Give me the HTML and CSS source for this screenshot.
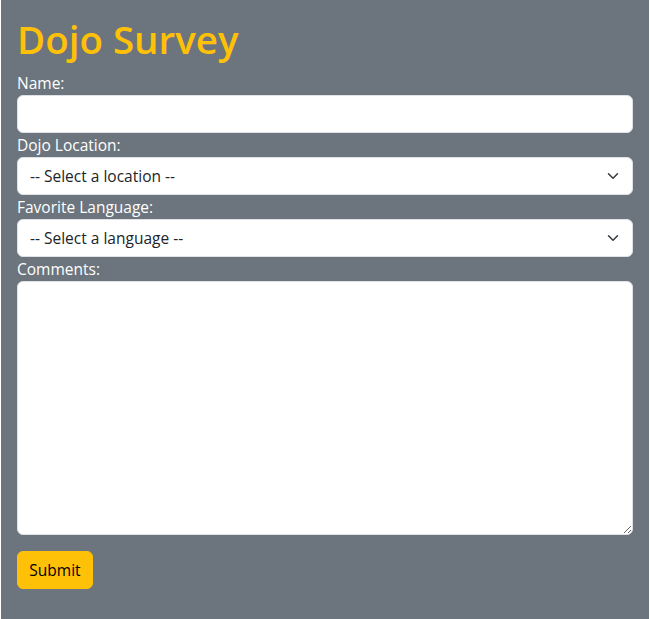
FILE: index.html
```html
<!DOCTYPE html>
<html lang="en">
<head>
<meta charset="utf-8">
<title>Dojo Survey</title>
<link rel="stylesheet" href="styles.css">
</head>
<body>
<div class="page">
  <h1 class="title">Dojo Survey</h1>
  <form class="survey">
    <label class="label" for="name">Name:</label>
    <input class="control" id="name" type="text">
    <label class="label" for="loc">Dojo Location:</label>
    <div class="select-wrap">
      <select class="control select" id="loc">
        <option>-- Select a location --</option>
      </select>
      <svg class="chevron" width="16" height="12" viewBox="0 0 16 16"><path d="M2 5l6 6 6-6" fill="none" stroke="#343a40" stroke-width="2" stroke-linecap="round" stroke-linejoin="round"/></svg>
    </div>
    <label class="label" for="lang">Favorite Language:</label>
    <div class="select-wrap">
      <select class="control select" id="lang">
        <option>-- Select a language --</option>
      </select>
      <svg class="chevron" width="16" height="12" viewBox="0 0 16 16"><path d="M2 5l6 6 6-6" fill="none" stroke="#343a40" stroke-width="2" stroke-linecap="round" stroke-linejoin="round"/></svg>
    </div>
    <label class="label" for="comments">Comments:</label>
    <textarea class="control textarea" id="comments"></textarea>
    <button class="submit" type="button">Submit</button>
  </form>
</div>
</body>
</html>
```
FILE: styles.css
```css
html, body {
  margin: 0;
  padding: 0;
  background: #fff;
}
.page {
  margin: 0 1px;
  min-height: 619px;
  box-sizing: border-box;
  padding: 16px;
  background: #6c757d;
  font-family: "Open Sans", "Noto Sans", sans-serif;
  font-size: 15.5px;
  color: #fff;
}
.title {
  margin: 0 0 8px;
  font-size: 38.5px;
  line-height: 47px;
  font-weight: 600;
  color: #ffc107;
}
.survey {
  display: flex;
  flex-direction: column;
}
.label {
  display: block;
  line-height: 24px;
  height: 24px;
}
.control {
  display: block;
  width: 100%;
  box-sizing: border-box;
  height: 38px;
  margin: 0;
  padding: 6px 12px;
  font-family: inherit;
  font-size: 15.5px;
  line-height: 24px;
  color: #212529;
  background: #fff;
  border: 1px solid #dee2e6;
  border-radius: 6px;
  outline: none;
}
.select-wrap {
  position: relative;
}
.select {
  appearance: none;
  -webkit-appearance: none;
  padding-right: 36px;
}
.chevron {
  position: absolute;
  right: 12px;
  top: 13px;
  pointer-events: none;
}
.textarea {
  height: 254px;
  resize: vertical;
}
.submit {
  align-self: flex-start;
  margin-top: 16px;
  height: 38px;
  width: 76px;
  padding: 6px 0;
  font-family: inherit;
  font-size: 15.5px;
  line-height: 24px;
  color: #000;
  background: #ffc107;
  border: 1px solid #ffc107;
  border-radius: 6px;
}
```
